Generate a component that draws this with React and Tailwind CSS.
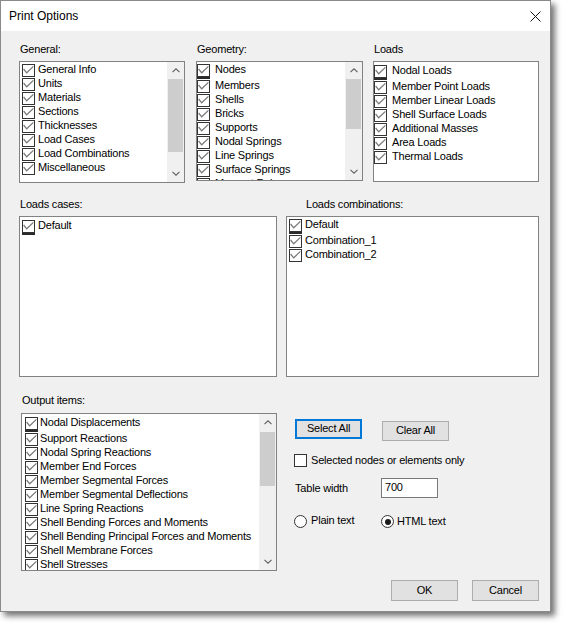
import React from 'react'

const general = ['General Info', 'Units', 'Materials', 'Sections', 'Thicknesses', 'Load Cases', 'Load Combinations', 'Miscellaneous']
const geometry = ['Nodes', 'Members', 'Shells', 'Bricks', 'Supports', 'Nodal Springs', 'Line Springs', 'Surface Springs', 'Moment Releases']
const loads = ['Nodal Loads', 'Member Point Loads', 'Member Linear Loads', 'Shell Surface Loads', 'Additional Masses', 'Area Loads', 'Thermal Loads']
const loadCases = ['Default']
const loadCombos = ['Default', 'Combination_1', 'Combination_2']
const outputItems = [
  'Nodal Displacements',
  'Support Reactions',
  'Nodal Spring Reactions',
  'Member End Forces',
  'Member Segmental Forces',
  'Member Segmental Deflections',
  'Line Spring Reactions',
  'Shell Bending Forces and Moments',
  'Shell Bending Principal Forces and Moments',
  'Shell Membrane Forces',
  'Shell Stresses',
]

function CheckBox({ checked = true, className = '' }) {
  return (
    <span className={`w-[13px] h-[13px] shrink-0 border border-[#333] bg-white flex ${className}`}>
      {checked && (
        <svg width="11" height="11" viewBox="0 0 11 11">
          <path d="M0.6 4 L3.7 7.8 L10.4 1.4" fill="none" stroke="#777" strokeWidth="1.2" />
        </svg>
      )}
    </span>
  )
}

function Row({ label, offset }) {
  return (
    <div className="h-[14px] flex items-center whitespace-nowrap">
      <span className="w-[18px] shrink-0 flex">
        <CheckBox className={offset} />
      </span>
      <span className="pb-[2px] leading-[12px]">{label}</span>
    </div>
  )
}

function Chevron({ down }) {
  return (
    <svg width="8" height="5" viewBox="0 0 8 5">
      <path d={down ? 'M0.5 0.8 L4 4.2 L7.5 0.8' : 'M0.5 4.2 L4 0.8 L7.5 4.2'} fill="none" stroke="#606060" strokeWidth="1.1" />
    </svg>
  )
}

function ScrollBar({ thumb }) {
  return (
    <div className="w-[17px] shrink-0 bg-[#f0f0f0] flex flex-col">
      <div className="h-[17px] flex items-center justify-center">
        <Chevron />
      </div>
      <div className="flex-1 min-h-0">
        <div className={`ml-[1px] mr-[1px] bg-[#cdcdcd] ${thumb}`} />
      </div>
      <div className="h-[17px] flex items-center justify-center">
        <Chevron down />
      </div>
    </div>
  )
}

function ListBox({ items, className = '', offset, pad, glitch, thumb }) {
  return (
    <div className={`bg-white border border-[#828282] overflow-hidden flex ${className}`}>
      <div className={`flex-1 min-w-0 ${pad}`}>
        {items.map((it, i) =>
          glitch && i === 0 ? (
            <div key={it}>
              <Row label={it} offset={offset} />
              <div className={`h-[2px] w-[13px] bg-[#2a2a2a] ${offset}`} />
            </div>
          ) : (
            <Row key={it} label={it} offset={offset} />
          )
        )}
      </div>
      {thumb && <ScrollBar thumb={thumb} />}
    </div>
  )
}

function Label({ children, className = 'pl-[1px]' }) {
  return <div className={`h-[13px] leading-[13px] whitespace-nowrap ${className}`}>{children}</div>
}

function Button({ children, className = '' }) {
  return (
    <div className={`w-[67px] flex items-center justify-center bg-[#e1e1e1] ${className}`}>
      <span className="pb-[1px]">{children}</span>
    </div>
  )
}

function Radio({ checked }) {
  return (
    <span className="w-[13px] h-[13px] shrink-0 rounded-full border border-[#333] bg-white flex items-center justify-center">
      {checked && <span className="w-[6px] h-[6px] rounded-full bg-[#1a1a1a]" />}
    </span>
  )
}

export default function App() {
  return (
    <div className="w-[566px] h-[627px] bg-white font-['Liberation_Sans',Arial,sans-serif] text-[11px] tracking-[-0.2px] text-black">
      <div className="w-[551px] h-[612px] border border-[#8a8a8a] bg-[#f0f0f0] shadow-[4px_4px_6px_rgba(0,0,0,0.55)] flex flex-col">
        {/* title bar */}
        <div className="h-[30px] bg-white flex items-center justify-between pl-[8px] pr-[9px]">
          <span className="text-[12px] tracking-normal leading-[14px]">Print Options</span>
          <svg width="11" height="11" viewBox="0 0 11 11">
            <path d="M0.5 0.5 L10.5 10.5 M10.5 0.5 L0.5 10.5" stroke="#111" strokeWidth="1" />
          </svg>
        </div>

        <div className="pl-[18px] pr-[11px] pt-[12px]">
          {/* general / geometry / loads */}
          <div className="flex">
            <div className="w-[166px]">
              <Label>General:</Label>
              <ListBox className="h-[122px] mt-[5px]" items={general} offset="ml-[2px]" pad="pt-[1px]" thumb="h-[73px]" />
            </div>
            <div className="w-[167px] ml-[11px]">
              <Label>Geometry:</Label>
              <ListBox className="h-[120px] mt-[5px]" items={geometry} offset="ml-[0px]" pad="pt-[1px]" glitch thumb="h-[50px]" />
            </div>
            <div className="w-[166px] ml-[10px]">
              <Label>Loads</Label>
              <ListBox className="h-[121px] mt-[5px]" items={loads} offset="ml-[0px]" pad="pt-[2px]" glitch />
            </div>
          </div>

          {/* load cases / combinations */}
          <div className="flex mt-[15px]">
            <div className="w-[258px]">
              <Label>Loads cases:</Label>
              <ListBox className="h-[161px] mt-[5px]" items={loadCases} offset="ml-[2px]" pad="pt-[2px]" glitch />
            </div>
            <div className="w-[253px] ml-[9px]">
              <Label className="pl-[20px]">Loads combinations:</Label>
              <ListBox className="h-[161px] mt-[5px]" items={loadCombos} offset="ml-[2px]" pad="pt-[1px]" glitch />
            </div>
          </div>

          {/* output items + options */}
          <div className="flex mt-[17px]">
            <div className="w-[256px] ml-[2px]">
              <Label>Output items:</Label>
              <ListBox className="h-[158px] mt-[6px]" items={outputItems} offset="ml-[3px]" pad="pt-[2px]" glitch thumb="h-[54px] mt-[1px]" />
            </div>
            <div className="ml-[17px] pt-[25px] flex flex-col">
              <div className="flex items-start">
                <Button className="ml-[1px] h-[20px] border-2 border-[#0078d7]">Select All</Button>
                <Button className="ml-[20px] mt-[2px] h-[20px] border border-[#adadad]">Clear All</Button>
              </div>
              <div className="flex items-center h-[13px] mt-[13px] whitespace-nowrap">
                <CheckBox checked={false} />
                <span className="ml-[4px] pb-[1px]">Selected nodes or elements only</span>
              </div>
              <div className="flex items-center h-[20px] mt-[11px]">
                <span className="w-[87px] pl-[1px]">Table width</span>
                <div className="w-[57px] h-[20px] border border-[#7a7a7a] bg-white flex items-center pl-[3px]">
                  <span className="pb-[1px]">700</span>
                </div>
              </div>
              <div className="flex items-start mt-[14px] whitespace-nowrap">
                <div className="w-[87px] flex items-center">
                  <Radio />
                  <span className="ml-[4px] pb-[2px]">Plain text</span>
                </div>
                <div className="flex items-center mt-[1px]">
                  <Radio checked />
                  <span className="ml-[3px] pb-[1px]">HTML text</span>
                </div>
              </div>
            </div>
          </div>

          {/* footer */}
          <div className="flex justify-end gap-[14px] mt-[9px]">
            <Button className="h-[21px] border border-[#adadad]">OK</Button>
            <Button className="h-[21px] border border-[#adadad]">Cancel</Button>
          </div>
        </div>
      </div>
    </div>
  )
}
